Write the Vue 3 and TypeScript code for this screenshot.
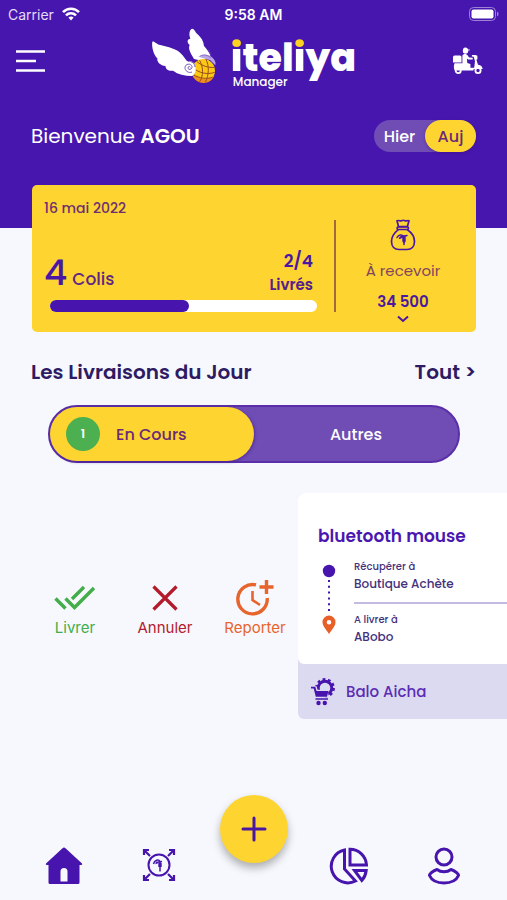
<script setup lang="ts">
import { ref } from 'vue'

type Day = 'hier' | 'auj'
type Tab = 'cours' | 'autres'

const day = ref<Day>('auj')
const tab = ref<Tab>('cours')
const total = 4
const delivered = 2
</script>

<template>
  <div class="screen">
    <header class="hero">
      <div class="status">
        <span class="carrier">
          Carrier
          <svg width="18" height="14" viewBox="0 0 18 14" fill="none" stroke="#fff" stroke-width="2.6" aria-hidden="true">
            <path d="M1 5.2C5.4 .6 12.600 .6 17 5.200" />
            <path d="M4 8.400C6.800 5.600 11.200 5.600 14 8.400" />
            <path d="M6.400 10.600C7.800 9.100 10.200 9.100 11.600 10.600L9 13.400Z" fill="#fff" stroke="none" />
          </svg>
        </span>
        <span class="time">9:58 AM</span>
        <svg class="battery" width="30" height="14" viewBox="0 0 30 14" aria-hidden="true">
          <rect x=".5" y=".5" width="26" height="13" rx="4" fill="none" stroke="#9d82d6" />
          <rect x="2.500" y="2.500" width="22" height="9" rx="2" fill="#fff" />
          <path d="M28 4.500c2 .8 2 4.200 0 5z" fill="#9d82d6" />
        </svg>
      </div>

      <div class="topbar">
        <button class="icon-button" aria-label="Menu">
          <svg width="30" height="24" viewBox="0 0 30 24" stroke="#fff" stroke-width="2.600" aria-hidden="true">
            <path d="M0 2.500H29M0 12H20M0 21.500H29" />
          </svg>
        </button>
        <div class="brand">
          <svg width="66" height="58" viewBox="35 25 198 174" aria-hidden="true">
            <path d="M164 118C152 98 146 86 151 76C142 68 143 58 153 57C148 44 150 30 158 27C166 27 167 37 174 43C186 53 193 66 194 79C203 89 210 99 213 108L190 124Z" fill="#fff" />
            <path d="M177 111C190 102 207 103 218 113C227 121 230 128 228 137L213 122Z" fill="#b8a5e6" />
            <path d="M183 109c11-6 24-2 32 6M207 90l8 16" fill="none" stroke="#7652c3" stroke-width="2" />
            <circle cx="192" cy="153" r="35" fill="#fbc914" />
            <path d="M158 158C161 178 174 190 194 190C210 189 222 179 225 166C206 184 177 181 158 158Z" fill="#ef8e1d" />
            <path d="M172 125C188 139 207 145 226 143M160 144C180 160 203 166 226 158M161 165C181 176 202 179 219 173M200 119C210 139 209 166 198 188M181 122C193 145 192 169 181 186" fill="none" stroke="#9a4c20" stroke-width="3" />
            <path d="M158 169C136 169 116 164 101 153C88 155 78 149 79 140C63 137 52 128 54 116C43 106 36 80 39 66C44 62 50 73 63 76C86 82 112 88 123 100C134 109 137 119 144 125C157 122 168 130 168 142C172 153 166 165 158 169Z" fill="#fff" />
            <path d="M158 157C148 162 136 153 137 143C138 132 154 130 158 140C160 149 147 153 146 145C145 141 151 139 153 143M146 125C157 124 167 132 167 142" fill="none" stroke="#7857bd" stroke-width="3" />
          </svg>
          <div class="brand-text">
            <div class="wordmark"><span class="dotted">i</span>tel<span class="dotted">i</span>ya</div>
            <div class="brand-sub">Manager</div>
          </div>
        </div>
        <button class="icon-button" aria-label="Livreur">
          <svg width="30" height="28" viewBox="0 0 30 28" fill="#fff" aria-hidden="true">
            <circle cx="12.500" cy="4" r="2.700" />
            <path d="M10 2.200c1-2.500 4.500-2.200 5 .3h1.800l-.3 1H10zM0 10q0-1.500 1.500-1.500H7q1.500 0 1.500 1.500v5.500H0z" />
            <path d="M9.400 8.500c1-2 3.900-2 4.900-.4l1.800 2.400 3.600.3v1.800l-4.600-.1-1.200-1 .4 4.500 3.100 1v5.200H9.400z" />
            <path d="M1.500 16.300h8.500l3 4.400h8.200l.8-6.500-1.300-4.500-1.800-.2V8h3.500l2 .8v3.500l-1 .4 1.600 5c3 .1 4.400 2 4.700 4.300H21l-.8 1.400H2c-1.200-.5-1.500-5-.5-6.600z" />
            <circle cx="5.200" cy="23.500" r="2.600" fill="none" stroke="#fff" stroke-width="1.800" />
            <circle cx="25" cy="23.500" r="2.600" fill="none" stroke="#fff" stroke-width="1.800" />
          </svg>
        </button>
      </div>

      <div class="welcome">
        <h1>Bienvenue <strong>AGOU</strong></h1>
        <div class="day-switch">
          <button :class="{ active: day === 'hier' }" @click="day = 'hier'">Hier</button>
          <button :class="{ active: day === 'auj' }" @click="day = 'auj'">Auj</button>
        </div>
      </div>
    </header>

    <main>
      <section class="summary">
        <div class="progress-side">
          <div class="date">16 mai 2022</div>
          <div class="counts">
            <div class="parcels"><span class="big">{{ total }}</span><span>Colis</span></div>
            <div class="done"><span class="ratio">{{ delivered }}/{{ total }}</span><span>Livrés</span></div>
          </div>
          <div class="bar"><div class="fill" :style="{ width: (delivered / total) * 100 + 2 + '%' }"></div></div>
        </div>
        <div class="divider"></div>
        <div class="amount-side">
          <svg width="26" height="32" viewBox="0 0 26 32" fill="none" stroke="#4a17a5" stroke-width="1.700" stroke-linejoin="round" stroke-linecap="round" aria-hidden="true">
            <path d="M8.500 7.500L7 1.800c2-1 3 .7 4.500 0 1.200-.8 2.200-.8 3.500 0 1.500.7 2.500-.8 4 0l-1.600 5.700z" />
            <path d="M8 8h9.500c1.200 0 1.200 2.500 0 2.500H8C6.800 10.500 6.800 8 8 8z" />
            <path d="M8 10.800C4 14 1.500 18 1.500 22.500c0 5 3 8 7.500 8h8c4.500 0 7.500-3 7.500-8 0-4.500-2.500-8.500-7-11.700" />
            <path d="M7 18.500c1.500-3 5-3.500 6.500-1l-4 1.800M10.500 18l6.500-1.500M14 17v8.500" stroke-width="1.500" />
            <path d="M14 18v4" stroke-width="3.400" />
          </svg>
          <span class="amount-label">À recevoir</span>
          <button class="amount">
            34 500
            <svg width="12" height="8" viewBox="0 0 12 8" fill="none" stroke="#4a17a5" stroke-width="2" aria-hidden="true"><path d="M1 1.500L6 6L11 1.500" /></svg>
          </button>
        </div>
      </section>

      <div class="section-head">
        <h2>Les Livraisons du Jour</h2>
        <a href="#tout">Tout &gt;</a>
      </div>

      <div class="tabs">
        <button :class="{ active: tab === 'cours' }" @click="tab = 'cours'"><span class="badge">1</span>En Cours</button>
        <button class="plain" :class="{ active: tab === 'autres' }" @click="tab = 'autres'">Autres</button>
      </div>

      <section class="swipe">
        <div class="actions">
          <button class="livrer">
            <svg width="42" height="36" viewBox="0 0 42 36" fill="none" stroke="currentColor" stroke-width="3.400" aria-hidden="true">
              <path d="M1.500 18.500L11.500 28.500M30 7L18 19M11.500 18.500L20.500 27.500L40 8" />
            </svg>
            Livrer
          </button>
          <button class="annuler">
            <svg width="36" height="36" viewBox="0 0 36 36" fill="none" stroke="currentColor" stroke-width="3.200" aria-hidden="true">
              <path d="M6.500 6.500L29.500 29.500M29.500 6.500L6.500 29.500" />
            </svg>
            Annuler
          </button>
          <button class="reporter">
            <svg width="38" height="36" viewBox="0 0 38 36" fill="none" stroke="currentColor" stroke-width="3.400" aria-hidden="true">
              <path d="M20 4.900A14.700 14.700 0 1 0 31.200 18" />
              <path d="M30.500 0V14M23.500 7H37.500" />
              <path d="M16.500 11V20L24 25" stroke-width="2.600" />
            </svg>
            Reporter
          </button>
        </div>

        <article class="delivery">
          <div class="delivery-body">
            <h3>bluetooth mouse</h3>
            <div class="route">
              <svg class="track" width="14" height="72" viewBox="0 0 14 72" aria-hidden="true">
                <circle cx="7" cy="8" r="6.200" fill="#4714ad" />
                <path d="M7 17V50" stroke="#4714ad" stroke-width="2" stroke-dasharray="2 3.800" />
                <path fill-rule="evenodd" d="M7 71C4 66.500.5 63 .5 59a6.500 6.500 0 1 1 13 0C13.500 63 10 66.500 7 71zM7 57a2.300 2.300 0 1 0 0 4.600a2.300 2.300 0 0 0 0-4.600z" fill="#e85f27" />
              </svg>
              <div class="stops">
                <div class="stop"><small>Récupérer à</small><span>Boutique Achète</span></div>
                <div class="stop"><small>A livrer à</small><span>ABobo</span></div>
              </div>
            </div>
          </div>
          <div class="customer">
            <svg width="24" height="28" viewBox="0 0 24 28" aria-hidden="true">
              <circle cx="14" cy="10" r="6.800" fill="none" stroke="#4714ad" stroke-width="3" />
              <circle cx="14" cy="10" r="8.600" fill="none" stroke="#4714ad" stroke-width="2.600" stroke-dasharray="2.800 2.604" />
              <path d="M0 9H5L6 12.500H16L17 19H4L2.500 11H0Z" fill="#dbdaf0" stroke="#dbdaf0" stroke-width="1.500" />
              <path d="M0 8.800H4.300L5.500 13H17.500L16 18.800H4.800L2.700 10.500H0Z" fill="#4714ad" />
              <path d="M4.500 21H17" stroke="#4714ad" stroke-width="1.500" />
              <circle cx="7.500" cy="25" r="2.200" fill="#4714ad" />
              <circle cx="13.800" cy="25" r="2.200" fill="#4714ad" />
            </svg>
            Balo Aicha
          </div>
        </article>
      </section>
    </main>

    <nav class="nav">
      <a href="#accueil" aria-label="Accueil">
        <svg width="38" height="38" viewBox="0 0 38 38" fill="#4714ad" aria-hidden="true">
          <path fill-rule="evenodd" d="M19 .6q.8 0 1.500.6L37 16.500q.8 1.200-.8 1.500H34.500V35.500q0 1.500-1.500 1.500H5q-1.500 0-1.500-1.500V18H1.800q-1.600-.3-.8-1.500L17.500 1.200q.7-.6 1.500-.6zM15.500 34.500h7V24.500a3.500 3.500 0 0 0-7 0z" />
        </svg>
      </a>
      <a href="#scanner" aria-label="Scanner">
        <svg width="34" height="38" viewBox="0 0 34 38" fill="none" stroke="#4714ad" stroke-width="2" aria-hidden="true">
          <circle cx="17" cy="18" r="10.500" />
          <path d="M2 8V3H7M2 3L8 9M27 3H32V8M32 3L26 9M2 28V33H7M2 33L8 27M27 33H32V28M32 33L26 27" stroke-width="2.200" />
          <path d="M11.500 17c1-4 5-5 6.500-2.500l-4.500 2M14 15.500l6-1M18 15v9.500" stroke-width="1.500" />
          <path d="M18 16v4" stroke-width="3.400" />
        </svg>
      </a>
      <button class="fab" aria-label="Ajouter">
        <svg width="26" height="26" viewBox="0 0 26 26" stroke="#4a17a5" stroke-width="3" stroke-linecap="round" aria-hidden="true"><path d="M13 2V24M2 13H24" /></svg>
      </button>
      <a href="#statistiques" aria-label="Statistiques">
        <svg width="40" height="38" viewBox="0 0 40 38" fill="none" stroke="#4714ad" stroke-width="3" aria-hidden="true">
          <path d="M15.500 3A16.600 16.600 0 1 0 26.500 34L15.500 22Z" />
          <path d="M21 2.300V18H37.500A16.500 16.500 0 0 0 21 2.300Z" />
          <path d="M25.500 23.500H37.200Q36.500 29.500 32.800 33.500Z" />
        </svg>
      </a>
      <a href="#profil" aria-label="Profil">
        <svg width="34" height="38" viewBox="0 0 34 38" fill="none" stroke="#4714ad" stroke-width="3" stroke-linejoin="round" aria-hidden="true">
          <circle cx="17" cy="10" r="8" />
          <path d="M10 22.500C5 24 2.500 27.500 2.500 28.500C4.500 33 10 36 17 36S29.500 33 31.500 28.500C31.500 27.500 29 24 24 22.500C20 25.500 14 25.500 10 22.500Z" />
        </svg>
      </a>
    </nav>
  </div>
</template>

<style>
body {
  margin: 0;
  background: #f6f8fd;
}
</style>

<style scoped>
.screen {
  min-height: 100vh;
  display: flex;
  flex-direction: column;
  overflow: hidden;
  background: #f6f8fd;
  color: #4a1a9e;
  font-family: Poppins, Inter, "Open Sans", sans-serif;
}
.screen * {
  box-sizing: border-box;
}
svg {
  display: block;
  flex: none;
}
h1, h2, h3 {
  margin: 0;
}
button {
  margin: 0;
  padding: 0;
  border: 0;
  background: none;
  color: inherit;
  font: inherit;
  cursor: pointer;
}
a {
  color: inherit;
  text-decoration: none;
}
.hero {
  padding-bottom: 76px;
  background: #4716ae;
  color: #fff;
}
.status {
  display: grid;
  grid-template-columns: 1fr auto 1fr;
  align-items: center;
  height: 28px;
  padding: 0 8px;
  font-family: Inter, sans-serif;
  font-size: 14px;
}
.carrier {
  display: flex;
  align-items: center;
  gap: 8px;
  color: #e4dcf6;
}
.time {
  font-weight: 600;
}
.battery {
  justify-self: end;
}
.topbar {
  display: flex;
  align-items: center;
  justify-content: space-between;
  height: 66px;
  padding: 0 24px 0 16px;
}
.brand {
  display: flex;
  align-self: flex-start;
  align-items: flex-start;
  gap: 14px;
  margin-left: 8px;
}
.brand-text {
  padding-top: 13px;
}
.wordmark {
  font-size: 38px;
  font-weight: 800;
  line-height: 34px;
}
.dotted {
  background: linear-gradient(#ffd21f 0 18px, #fff 18px);
  background-clip: text;
  color: transparent;
}
.brand-sub {
  padding-left: 2px;
  font-size: 12px;
  font-weight: 500;
  line-height: 14px;
}
.welcome {
  display: flex;
  align-items: center;
  justify-content: space-between;
  margin-top: 26px;
  padding: 0 31px;
}
.welcome h1 {
  font-size: 20px;
  font-weight: 400;
}
.welcome strong {
  font-weight: 600;
}
.day-switch {
  display: flex;
  height: 32px;
  border-radius: 16px;
  background: #6f4db5;
  font-size: 16px;
  font-weight: 500;
}
.day-switch button {
  width: 51px;
  border-radius: 16px;
}
.day-switch .active {
  background: #fed430;
  color: #6a2a78;
  box-shadow: 0 1px 3px #3a108080;
}
.summary {
  display: grid;
  grid-template-columns: 1fr 2px 140px;
  margin: -43px 31px 0 32px;
  border-radius: 5px;
  background: #fed430;
}
.progress-side {
  padding: 12px 17px 20px 12px;
}
.date {
  color: #6e2f70;
  font-size: 14px;
  font-weight: 500;
  line-height: 22px;
}
.counts {
  display: flex;
  justify-content: space-between;
  align-items: flex-end;
  margin: 31px 4px 4px 0;
}
.parcels {
  display: flex;
  align-items: baseline;
  gap: 5px;
  color: #5f2684;
  font-size: 17px;
  font-weight: 500;
  line-height: 24px;
}
.big {
  color: #4a17a5;
  font-size: 36px;
  line-height: 46px;
}
.done {
  display: flex;
  flex-direction: column;
  text-align: right;
  font-size: 15px;
  font-weight: 600;
  line-height: 23px;
  color: #57208c;
}
.ratio {
  color: #4a17a5;
  font-size: 17px;
}
.bar {
  height: 12px;
  margin-left: 6px;
  border-radius: 6px;
  background: #fff;
}
.fill {
  height: 100%;
  border-radius: 6px;
  background: #4714ad;
}
.divider {
  margin: 35px 0 20px;
  background: #a2683f;
}
.amount-side {
  display: flex;
  flex-direction: column;
  align-items: center;
  padding: 34px 6px 0 0;
}
.amount-label {
  margin: 9px 0;
  color: #82445f;
  font-size: 15px;
  line-height: 22px;
}
.amount {
  display: flex;
  flex-direction: column;
  align-items: center;
  gap: 2px;
  font-size: 15px;
  font-weight: 600;
  line-height: 22px;
}
.section-head {
  display: flex;
  justify-content: space-between;
  margin: 26px 31px 0;
  color: #2e1b63;
  font-size: 20px;
  font-weight: 600;
  line-height: 28px;
}
.section-head h2 {
  font: inherit;
}
.tabs {
  display: grid;
  grid-template-columns: 1fr 1fr;
  height: 58px;
  margin: 19px 47px 0 48px;
  border: 2px solid #5a2fa8;
  border-radius: 29px;
  background: #6f4db5;
  color: #fff;
  font-size: 16px;
  font-weight: 500;
}
.tabs button {
  display: flex;
  align-items: center;
  gap: 16px;
  padding-left: 16px;
  border-radius: 27px;
}
.tabs .plain {
  justify-content: center;
  padding: 0;
}
.tabs .active {
  background: #fed430;
  color: #6a2a78;
  box-shadow: 1px 1px 3px #3a108080;
}
.badge {
  display: flex;
  align-items: center;
  justify-content: center;
  width: 34px;
  height: 34px;
  border-radius: 50%;
  background: #4caf50;
  color: #fff;
  font-size: 12px;
  font-weight: 600;
}
.swipe {
  display: flex;
  align-items: center;
  margin-top: 30px;
}
.actions {
  flex: none;
  display: grid;
  grid-template-columns: repeat(3, 90px);
  padding: 6px 0 0 30px;
  font-family: Inter, sans-serif;
  font-size: 15px;
  line-height: 20px;
}
.actions button {
  display: flex;
  flex-direction: column;
  align-items: center;
  gap: 2px;
}
.livrer {
  color: #43ad4a;
}
.annuler {
  color: #b31b2c;
}
.reporter {
  color: #e8642d;
}
.delivery {
  flex: 1 0 240px;
  margin-left: -2px;
  border-radius: 6px;
  background: #dbdaf0;
}
.delivery-body {
  padding: 29px 0 18px 20px;
  border-radius: 6px;
  background: #fff;
}
.delivery h3 {
  color: #4a17b0;
  font-size: 17px;
  font-weight: 600;
  line-height: 28px;
}
.route {
  display: flex;
  gap: 18px;
  margin-top: 9px;
  padding: 0 0 0 4px;
}
.track {
  margin-top: 4px;
}
.stops {
  flex: 1;
  color: #44307c;
}
.stop {
  display: flex;
  flex-direction: column;
  font-size: 12px;
  font-weight: 500;
  line-height: 18px;
}
.stop + .stop {
  margin-top: 9px;
  padding-top: 8px;
  border-top: 2px solid #c4bbe2;
}
.stop small {
  font-size: 10px;
  line-height: 16px;
}
.customer {
  display: flex;
  align-items: center;
  gap: 11px;
  height: 55px;
  padding-left: 13px;
  color: #5b2cb5;
  font-size: 15px;
  font-weight: 500;
}
.nav {
  display: grid;
  grid-template-columns: repeat(5, 1fr);
  align-items: end;
  justify-items: center;
  margin-top: auto;
  padding: 0 16px 15px;
}
.fab {
  display: flex;
  align-items: center;
  justify-content: center;
  width: 68px;
  height: 68px;
  margin-bottom: 22px;
  border-radius: 50%;
  background: #fed430;
  box-shadow: 0 5px 8px #0000004d;
}
</style>
